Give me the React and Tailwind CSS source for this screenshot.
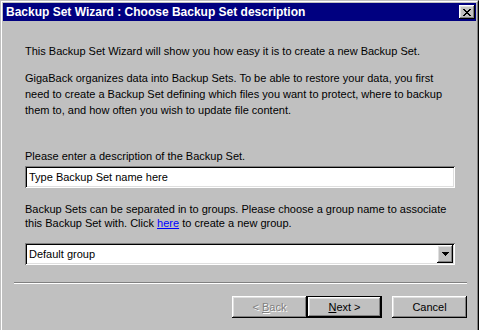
import React from "react";

const raised = "shadow-[inset_-1px_-1px_#000,inset_1px_1px_#fff,inset_-2px_-2px_#808080,inset_2px_2px_#dfdfdf]";
const sunken = "shadow-[inset_1px_1px_#808080,inset_-1px_-1px_#fff,inset_2px_2px_#000,inset_-2px_-2px_#dfdfdf]";

function Btn({ children, disabled, def, className = "" }) {
  return (
    <div
      className={`h-[22px] w-[75px] bg-[#c0c0c0] flex items-center justify-center ${def ? "border border-black" : ""} ${className}`}
    >
      <div className={`w-full h-full flex items-center justify-center ${raised}`}>
        <span
          className={`text-[11px] leading-none ${disabled ? "text-[#808080] [text-shadow:1px_1px_0_#fff]" : "text-black"}`}
        >
          {children}
        </span>
      </div>
    </div>
  );
}

export default function App() {
  return (
    <div
      className="w-[479px] h-[330px] bg-[#c0c0c0] overflow-hidden border-t border-l border-[#c0c0c0] border-r border-r-black"
      style={{ fontFamily: '"Liberation Sans", Arial, sans-serif' }}
    >
      <div className="h-[340px] border-t border-l border-white border-r border-r-[#808080] p-[1px]">
        <div className="h-[18px] bg-[#000080] flex items-center justify-between pl-[3px] pr-[1px]">
          <span className="text-white font-bold text-[12px] leading-none">
            Backup Set Wizard : Choose Backup Set description
          </span>
          <div className={`w-[16px] h-[14px] bg-[#c0c0c0] flex items-center justify-center ${raised}`}>
            <svg width="8" height="7" viewBox="0 0 8 7" shapeRendering="crispEdges">
              <path
                d="M0 0h2v1h-2zM6 0h2v1h-2zM1 1h2v1h-2zM5 1h2v1h-2zM2 2h4v1h-4zM3 3h2v1h-2zM2 4h4v1h-4zM1 5h2v1h-2zM5 5h2v1h-2zM0 6h2v1h-2zM6 6h2v1h-2z"
                fill="#000"
              />
            </svg>
          </div>
        </div>

        <div className="flex flex-col pl-[22px] text-[11px] leading-[14px] text-black">
          <p className="mt-[23px]">
            This Backup Set Wizard will show you how easy it is to create a new Backup Set.
          </p>
          <p className="mt-[12px] leading-[16px]">
            GigaBack organizes data into Backup Sets. To be able to restore your data, you first
            <br />
            need to create a Backup Set defining which files you want to protect, where to backup
            <br />
            them to, and how often you wish to update file content.
          </p>
          <p className="mt-[31px]">Please enter a description of the Backup Set.</p>
          <div className={`mt-[3px] w-[430px] h-[22px] bg-white flex items-center pl-[4px] ${sunken}`}>
            <span>Type Backup Set name here</span>
          </div>
          <p className="mt-[14px]">
            Backup Sets can be separated in to groups. Please choose a group name to associate
            <br />
            this Backup Set with. Click{" "}
            <span className="text-[#0000ff] underline">here</span> to create a new group.
          </p>
          <div className={`mt-[13px] w-[430px] h-[22px] bg-white flex items-center justify-between pl-[4px] pr-[2px] ${sunken}`}>
            <span>Default group</span>
            <div className={`w-[16px] h-[18px] bg-[#c0c0c0] flex items-center justify-center ${raised}`}>
              <svg width="7" height="4" viewBox="0 0 7 4" shapeRendering="crispEdges">
                <path d="M0 0h7v1h-7zM1 1h5v1h-5zM2 2h3v1h-3zM3 3h1v1h-1z" fill="#000" />
              </svg>
            </div>
          </div>
        </div>

        <div className="mt-[17px] ml-[11px] w-[453px] h-[2px] border-t border-[#808080] border-b border-b-white" />

        <div className="mt-[12px] flex pl-[229px]">
          <Btn disabled>
            &lt; <span className="underline">B</span>ack
          </Btn>
          <Btn def>
            <span className="underline">N</span>ext &gt;
          </Btn>
          <Btn className="ml-[10px]">Cancel</Btn>
        </div>
      </div>
    </div>
  );
}
